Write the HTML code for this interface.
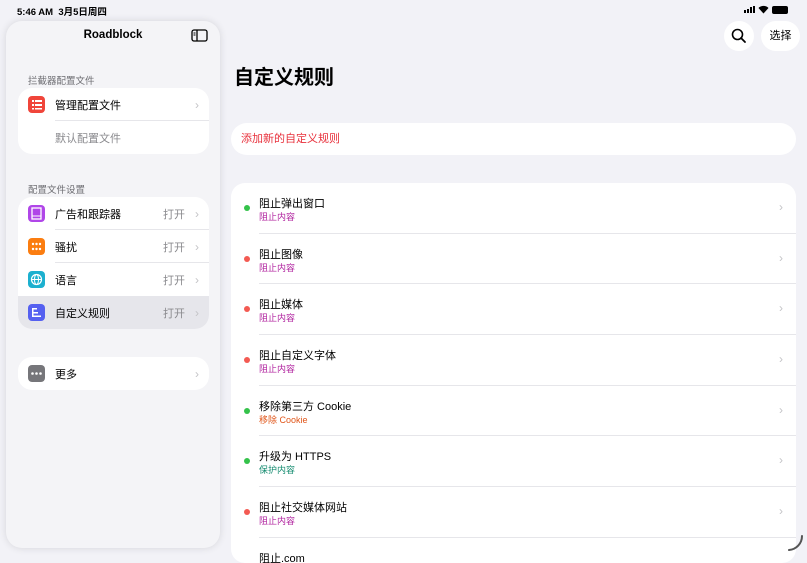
<!DOCTYPE html>
<html><head><meta charset="utf-8"><style>
*{margin:0;padding:0;box-sizing:border-box}
body{width:807px;height:556px;overflow:hidden;background:#f2f2f7;font-family:"Liberation Sans","Noto Sans CJK SC",sans-serif;position:relative;color:#000}
.a{position:absolute}
.side{left:6px;top:21px;width:214px;height:527px;background:#f4f4f7;border-radius:16px;box-shadow:0 0 8px rgba(0,0,0,.12)}
.grp{position:absolute;left:12px;width:191px;background:#fff;border-radius:14px;overflow:hidden}
.row{position:relative;height:33px;font-size:11px;display:flex;align-items:center}
.ic{position:absolute;left:10px;top:8px;width:17px;height:17px;border-radius:4px}
.lbl{position:absolute;left:37px}
.val{position:absolute;right:24px;color:#8a8a8e}
.chev{position:absolute;right:10px;color:#c4c4c7;font-size:12px}
.sep{position:absolute;left:37px;right:0;bottom:0;height:1px;background:#e6e6ea}
.sh{position:absolute;left:28px;font-size:9.5px;color:#6d6d72}
.list{left:231px;top:183px;width:565px;height:380px;background:#fff;border-radius:14px;overflow:hidden}
.it{position:relative;height:50.7px}
.it .t{position:absolute;left:28px;top:12px;font-size:11px}
.it .s{position:absolute;left:28px;top:27px;font-size:9px}
.it .d{position:absolute;left:13px;top:22px;width:6px;height:6px;border-radius:50%}
.it .c{position:absolute;right:13px;top:17px;color:#c4c4c7;font-size:12px}
.it .ln{position:absolute;left:28px;right:0;bottom:0;height:1px;background:#e6e6ea}
</style></head><body>
<div class="a" style="left:17px;top:4px;font-size:9.5px;font-weight:bold">5:46 AM&nbsp;&nbsp;3月5日周四</div>
<div class="a" style="left:744px;top:6px;width:12px;height:7px;display:flex;align-items:flex-end;gap:1px"><i style="width:2px;height:3px;background:#000"></i><i style="width:2px;height:4px;background:#000"></i><i style="width:2px;height:6px;background:#000"></i><i style="width:2px;height:7px;background:#000"></i></div>
<svg class="a" style="left:758px;top:5px" width="11" height="9" viewBox="0 0 11 9"><path d="M5.5 8.5 L0.5 3 A7 7 0 0 1 10.5 3 Z" fill="#000"/></svg>
<div class="a" style="left:772px;top:6px;width:16px;height:8px;border-radius:2px;background:#000"></div>
<div class="side a">
 <div class="a" style="left:0;width:214px;top:8px;text-align:center;font-size:11.5px;font-weight:bold">Roadblock</div>
 <svg class="a" style="left:185px;top:8px" width="17" height="13" viewBox="0 0 17 13"><rect x="1" y="1" width="15" height="11" rx="2" fill="none" stroke="#000" stroke-width="1.3"/><line x1="6" y1="1" x2="6" y2="12" stroke="#000" stroke-width="1.3"/><line x1="2.5" y1="4" x2="4.5" y2="4" stroke="#000"/><line x1="2.5" y1="6" x2="4.5" y2="6" stroke="#000"/></svg>
 <div class="sh" style="top:52px;left:22px">拦截器配置文件</div>
 <div class="grp" style="top:67px">
  <div class="row"><div class="ic" style="background:#f0453a"><svg width="17" height="17"><g fill="#fff"><rect x="4" y="4" width="2" height="2"/><rect x="7" y="4" width="7" height="2"/><rect x="4" y="8" width="2" height="2"/><rect x="7" y="8" width="7" height="2"/><rect x="4" y="12" width="2" height="1.5"/><rect x="7" y="12" width="7" height="1.5"/></g></svg></div><span class="lbl">管理配置文件</span><span class="chev">›</span><div class="sep"></div></div>
  <div class="row"><span class="lbl" style="color:#8a8a8e">默认配置文件</span></div>
 </div>
 <div class="sh" style="top:161px;left:22px">配置文件设置</div>
 <div class="grp" style="top:176px">
  <div class="row"><div class="ic" style="background:#b046e8"><svg width="17" height="17"><rect x="4" y="3" width="9" height="11" fill="none" stroke="#fff" stroke-width="1.3"/><line x1="4" y1="11" x2="13" y2="11" stroke="#fff"/></svg></div><span class="lbl">广告和跟踪器</span><span class="val">打开</span><span class="chev">›</span><div class="sep"></div></div>
  <div class="row"><div class="ic" style="background:#fb7d10"><svg width="17" height="17" fill="#fff"><circle cx="5" cy="6" r="1.2"/><circle cx="8.5" cy="6" r="1.2"/><circle cx="12" cy="6" r="1.2"/><circle cx="5" cy="11" r="1.2"/><circle cx="8.5" cy="11" r="1.2"/><circle cx="12" cy="11" r="1.2"/></svg></div><span class="lbl">骚扰</span><span class="val">打开</span><span class="chev">›</span><div class="sep"></div></div>
  <div class="row"><div class="ic" style="background:#1cb0cf"><svg width="17" height="17"><circle cx="8.5" cy="8.5" r="5" fill="none" stroke="#fff" stroke-width="1.2"/><ellipse cx="8.5" cy="8.5" rx="2" ry="5" fill="none" stroke="#fff"/><line x1="3.5" y1="8.5" x2="13.5" y2="8.5" stroke="#fff"/></svg></div><span class="lbl">语言</span><span class="val">打开</span><span class="chev">›</span></div>
  <div class="row" style="background:#e6e6eb"><div class="ic" style="background:#5560f0"><svg width="17" height="17" fill="#fff"><rect x="4" y="4" width="5" height="1.5"/><rect x="4" y="4" width="1.5" height="9"/><rect x="4" y="8" width="6" height="1.5"/><rect x="4" y="11.5" width="9" height="1.5"/></svg></div><span class="lbl">自定义规则</span><span class="val">打开</span><span class="chev">›</span></div>
 </div>
 <div class="grp" style="top:336px">
  <div class="row"><div class="ic" style="background:#76767a"><svg width="17" height="17" fill="#fff"><circle cx="4.5" cy="8.5" r="1.3"/><circle cx="8.5" cy="8.5" r="1.3"/><circle cx="12.5" cy="8.5" r="1.3"/></svg></div><span class="lbl">更多</span><span class="chev">›</span></div>
 </div>
</div>
<div class="a" style="left:724px;top:21px;width:30px;height:30px;border-radius:50%;background:#fff"><svg width="30" height="30"><circle cx="13.5" cy="13.5" r="5" fill="none" stroke="#000" stroke-width="1.6"/><line x1="17" y1="17" x2="21" y2="21" stroke="#000" stroke-width="1.8" stroke-linecap="round"/></svg></div>
<div class="a" style="left:761px;top:21px;width:39px;height:30px;border-radius:15px;background:#fff;font-size:11px;text-align:center;line-height:30px">选择</div>
<div class="a" style="left:234px;top:61px;font-size:20px;font-weight:bold">自定义规则</div>
<div class="a" style="left:231px;top:123px;width:565px;height:32px;border-radius:16px;background:#fff;color:#e8313c;font-size:11px;line-height:32px;padding-left:10px">添加新的自定义规则</div>
<div class="a list">
 <div class="it"><i class="d" style="background:#34c24a"></i><span class="t">阻止弹出窗口</span><span class="s" style="color:#b0219e">阻止内容</span><span class="c">›</span><i class="ln"></i></div>
 <div class="it"><i class="d" style="background:#f35a52"></i><span class="t">阻止图像</span><span class="s" style="color:#b0219e">阻止内容</span><span class="c">›</span><i class="ln"></i></div>
 <div class="it"><i class="d" style="background:#f35a52"></i><span class="t">阻止媒体</span><span class="s" style="color:#b0219e">阻止内容</span><span class="c">›</span><i class="ln"></i></div>
 <div class="it"><i class="d" style="background:#f35a52"></i><span class="t">阻止自定义字体</span><span class="s" style="color:#b0219e">阻止内容</span><span class="c">›</span><i class="ln"></i></div>
 <div class="it"><i class="d" style="background:#34c24a"></i><span class="t">移除第三方 Cookie</span><span class="s" style="color:#e0561a">移除 Cookie</span><span class="c">›</span><i class="ln"></i></div>
 <div class="it"><i class="d" style="background:#34c24a"></i><span class="t">升级为 HTTPS</span><span class="s" style="color:#128a6e">保护内容</span><span class="c">›</span><i class="ln"></i></div>
 <div class="it"><i class="d" style="background:#f35a52"></i><span class="t">阻止社交媒体网站</span><span class="s" style="color:#b0219e">阻止内容</span><span class="c">›</span><i class="ln"></i></div>
 <div class="it"><span class="t">阻止.com</span></div>
</div>
<svg class="a" style="left:786px;top:534px" width="18" height="18"><path d="M16 2 A14 14 0 0 1 3 16" fill="none" stroke="#555" stroke-width="2" stroke-linecap="round"/></svg>
</body></html>
